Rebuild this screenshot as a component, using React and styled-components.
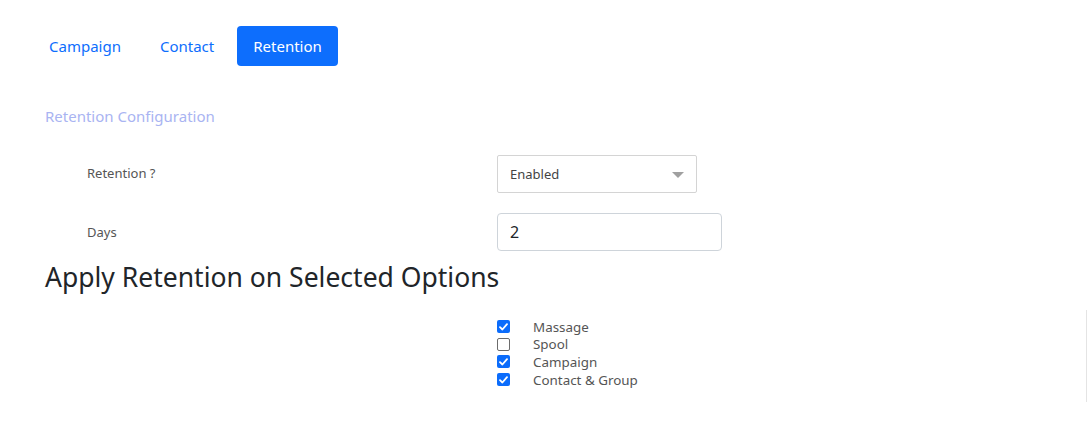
import React from 'react';
import styled, { createGlobalStyle } from 'styled-components';

const GlobalStyle = createGlobalStyle`
  html, body {
    margin: 0;
    padding: 0;
    background: #fff;
  }
  body {
    font-family: "Noto Sans", "Open Sans", sans-serif;
    color: #212529;
  }
`;

const Page = styled.div`
  position: relative;
  width: 1088px;
  height: 428px;
  box-sizing: border-box;
  padding: 26px 0 0 33px;
  overflow: hidden;
`;

const EdgeLine = styled.div`
  position: absolute;
  right: 1px;
  top: 310px;
  width: 1px;
  height: 92px;
  background: #e4e4e4;
`;

const Nav = styled.ul`
  display: flex;
  gap: 7px;
  list-style: none;
  margin: 0;
  padding: 0;
`;

const NavLink = styled.a`
  display: block;
  padding: 8px 16px;
  font-size: 15px;
  line-height: 24px;
  border-radius: 4px;
  text-decoration: none;
  cursor: pointer;
  color: ${(p) => (p.$active ? '#fff' : '#0d6efd')};
  background: ${(p) => (p.$active ? '#0d6efd' : 'transparent')};
`;

const Body = styled.div`
  padding-left: 12px;
`;

const SectionTitle = styled.div`
  margin-top: 38px;
  font-size: 15px;
  line-height: 24px;
  color: #a9b4f2;
`;

const FormGrid = styled.div`
  display: grid;
  grid-template-columns: 410px 1fr;
  row-gap: 20px;
  margin-top: 27px;
  padding-left: 42px;
  align-items: center;
`;

const Label = styled.label`
  font-size: 13px;
  color: #555;
  margin-top: ${(p) => p.$offset || 0}px;
`;

const SelectBox = styled.div`
  position: relative;
  width: 200px;
  height: 38px;
  box-sizing: border-box;
  border: 1px solid #d4d4d4;
  border-radius: 2px;
  display: flex;
  align-items: center;
  padding: 0 12px;
  font-size: 13px;
  color: #444;
`;

const Caret = styled.span`
  position: absolute;
  right: 12px;
  top: 16px;
  width: 0;
  height: 0;
  border-left: 6px solid transparent;
  border-right: 6px solid transparent;
  border-top: 6px solid #a0a0a0;
`;

const TextInput = styled.div`
  width: 225px;
  height: 38px;
  box-sizing: border-box;
  border: 1px solid #ced4da;
  border-radius: 4px;
  display: flex;
  align-items: center;
  padding: 0 12px;
  font-size: 16px;
  color: #212529;
`;

const Heading = styled.h3`
  margin: 10px 0 0;
  font-size: 26.5px;
  font-weight: 400;
  line-height: 32px;
  color: #212529;
`;

const CheckList = styled.div`
  margin: 25px 0 0 452px;
  display: flex;
  flex-direction: column;
`;

const CheckRow = styled.label`
  display: flex;
  align-items: center;
  height: 17.6px;
  font-size: 13.4px;
  color: #555;
`;

const Box = styled.span`
  width: 13px;
  height: 13px;
  box-sizing: border-box;
  border-radius: 2px;
  margin-right: 23px;
  display: flex;
  align-items: center;
  justify-content: center;
  background: ${(p) => (p.$checked ? '#0b6cfb' : '#fff')};
  border: ${(p) => (p.$checked ? 'none' : '1px solid #6c6c6c')};
`;

const Check = () => (
  <svg width="9" height="8" viewBox="0 0 9 8">
    <path d="M1 4.2 L3.4 6.5 L8 1.2" fill="none" stroke="#fff" strokeWidth="1.8" strokeLinecap="round" strokeLinejoin="round" />
  </svg>
);

const options = [
  { name: 'Massage', checked: true },
  { name: 'Spool', checked: false },
  { name: 'Campaign', checked: true },
  { name: 'Contact & Group', checked: true },
];

export default function App() {
  return (
    <>
      <GlobalStyle />
      <Page>
        <Nav>
          <li><NavLink>Campaign</NavLink></li>
          <li><NavLink>Contact</NavLink></li>
          <li><NavLink $active>Retention</NavLink></li>
        </Nav>
        <Body>
          <SectionTitle>Retention Configuration</SectionTitle>
          <FormGrid>
            <Label $offset={-2}>Retention ?</Label>
            <SelectBox>
              Enabled
              <Caret />
            </SelectBox>
            <Label>Days</Label>
            <TextInput>2</TextInput>
          </FormGrid>
          <Heading>Apply Retention on Selected Options</Heading>
          <CheckList>
            {options.map((o) => (
              <CheckRow key={o.name}>
                <Box $checked={o.checked}>{o.checked && <Check />}</Box>
                {o.name}
              </CheckRow>
            ))}
          </CheckList>
        </Body>
        <EdgeLine />
      </Page>
    </>
  );
}
